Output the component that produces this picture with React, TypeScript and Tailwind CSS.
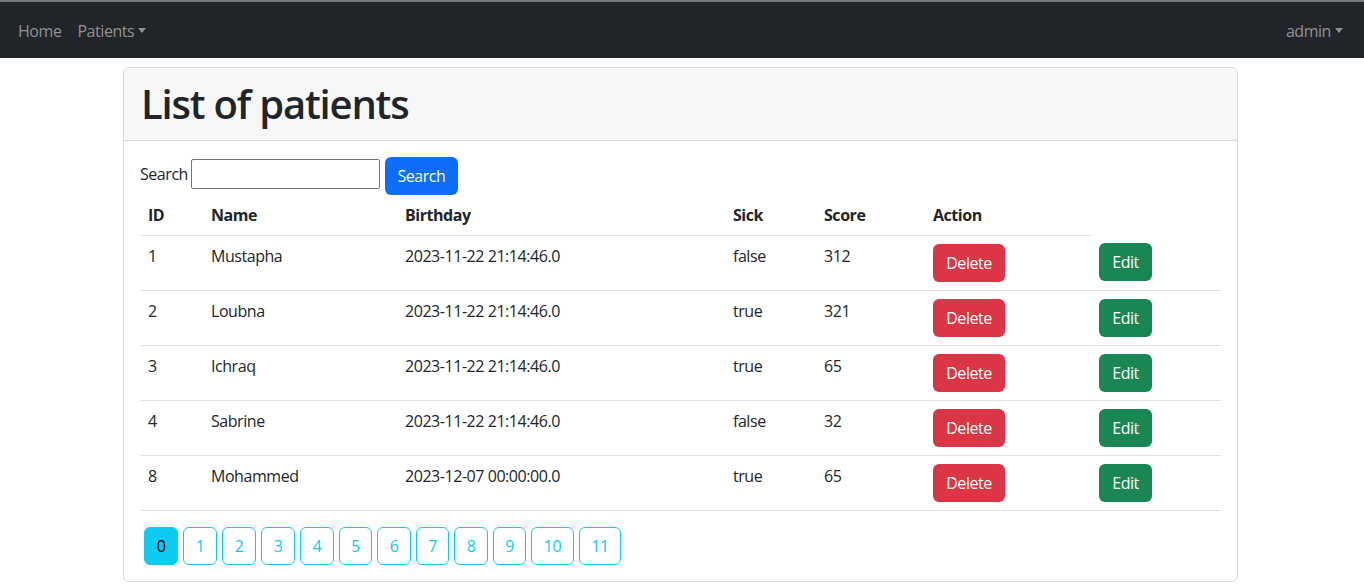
import React from "react";

const rows = [
  { id: 1, name: "Mustapha", bd: "2023-11-22 21:14:46.0", sick: "false", score: 312 },
  { id: 2, name: "Loubna", bd: "2023-11-22 21:14:46.0", sick: "true", score: 321 },
  { id: 3, name: "Ichraq", bd: "2023-11-22 21:14:46.0", sick: "true", score: 65 },
  { id: 4, name: "Sabrine", bd: "2023-11-22 21:14:46.0", sick: "false", score: 32 },
  { id: 8, name: "Mohammed", bd: "2023-12-07 00:00:00.0", sick: "true", score: 65 },
];

const Caret = () => (
  <span className="ml-[4px] inline-block w-0 h-0 border-l-[4px] border-r-[4px] border-t-[5px] border-l-transparent border-r-transparent border-t-[#8f9194] align-middle mb-[2px]" />
);

const pages = [
  { n: 0, w: "w-[34px]" },
  { n: 1, w: "w-[34px]" },
  { n: 2, w: "w-[34px]" },
  { n: 3, w: "w-[34px]" },
  { n: 4, w: "w-[34px]" },
  { n: 5, w: "w-[33px]" },
  { n: 6, w: "w-[34px]" },
  { n: 7, w: "w-[33px]" },
  { n: 8, w: "w-[34px]" },
  { n: 9, w: "w-[33px]" },
  { n: 10, w: "w-[43px]" },
  { n: 11, w: "w-[42px]" },
];

export default function App() {
  return (
    <div
      className="min-h-[586px] bg-white text-[#212529] text-[16px] leading-[24px] tracking-[-0.45px]"
      style={{ fontFamily: '"Open Sans", "Noto Sans", sans-serif' }}
    >
      <div className="h-[2px] bg-[#7a7a7a]" />
      <nav className="h-[56px] bg-[#212529] flex items-center justify-between pl-[18px] pr-[21px] pt-[2px]">
        <div className="flex items-center gap-[16px] text-[#8f9194]">
          <span>Home</span>
          <span className="flex items-center">Patients<Caret /></span>
        </div>
        <div className="flex items-center text-[#8f9194]">
          <span>admin</span>
          <Caret />
        </div>
      </nav>
      <div className="pl-[123px] pr-[126px] pt-[9px] pb-[4px]">
        <div className="border border-[#d9d9d9] rounded-[6px] overflow-hidden">
          <div className="bg-[#f7f7f7] border-b border-[#d9d9d9] h-[73px] flex items-center pl-[17px]">
            <h1 className="text-[40px] leading-[48px] font-semibold tracking-[-1.2px] text-[#212529]">List of patients</h1>
          </div>
          <div className="p-[16px]">
            <div className="flex items-center h-[38px]">
              <label className="mr-[3px] mb-[4px]">Search</label>
              <input className="w-[189px] h-[30px] mb-[4px] border border-[#767676] rounded-[2px] outline-none" />
              <button className="ml-[5px] h-[38px] w-[73px] rounded-[6px] bg-[#0d6efd] text-white">Search</button>
            </div>
            <table className="w-full border-collapse">
              <thead>
                <tr className="h-[40px]">
                  <th className="w-[63px] text-left font-bold px-[8px] border-b border-[#dee2e6]">ID</th>
                  <th className="w-[194px] text-left font-bold px-[8px] border-b border-[#dee2e6]">Name</th>
                  <th className="w-[328px] text-left font-bold px-[8px] border-b border-[#dee2e6]">Birthday</th>
                  <th className="w-[91px] text-left font-bold px-[8px] border-b border-[#dee2e6]">Sick</th>
                  <th className="w-[109px] text-left font-bold px-[8px] border-b border-[#dee2e6]">Score</th>
                  <th className="w-[166px] text-left font-bold px-[8px] border-b border-[#dee2e6]">Action</th>
                  <th />
                </tr>
              </thead>
              <tbody>
                {rows.map((r) => (
                  <tr key={r.id} className="border-b border-[#dee2e6]">
                    <td className="px-[8px] pt-[8px] pb-[8px] align-top h-[55px]">{r.id}</td>
                    <td className="px-[8px] pt-[8px] align-top">{r.name}</td>
                    <td className="px-[8px] pt-[8px] align-top">{r.bd}</td>
                    <td className="px-[8px] pt-[8px] align-top">{r.sick}</td>
                    <td className="px-[8px] pt-[8px] align-top">{r.score}</td>
                    <td className="px-[8px] pt-[8px] align-top">
                      <button className="h-[38px] w-[72px] rounded-[6px] bg-[#dc3545] text-white">Delete</button>
                    </td>
                    <td className="px-[8px] pt-[8px] align-top">
                      <button className="h-[38px] w-[53px] rounded-[6px] bg-[#198754] text-white">Edit</button>
                    </td>
                  </tr>
                ))}
              </tbody>
            </table>
            <div className="flex gap-[5px] pl-[4px] pt-[16px]">
              {pages.map((p) => (
                <button
                  key={p.n}
                  className={
                    p.n === 0
                      ? `h-[38px] ${p.w} rounded-[6px] border border-[#0dcaf0] bg-[#0dcaf0] text-black`
                      : `h-[38px] ${p.w} rounded-[6px] border border-[#0dcaf0] text-[#0dcaf0]`
                  }
                >
                  {p.n}
                </button>
              ))}
            </div>
          </div>
        </div>
      </div>
    </div>
  );
}
